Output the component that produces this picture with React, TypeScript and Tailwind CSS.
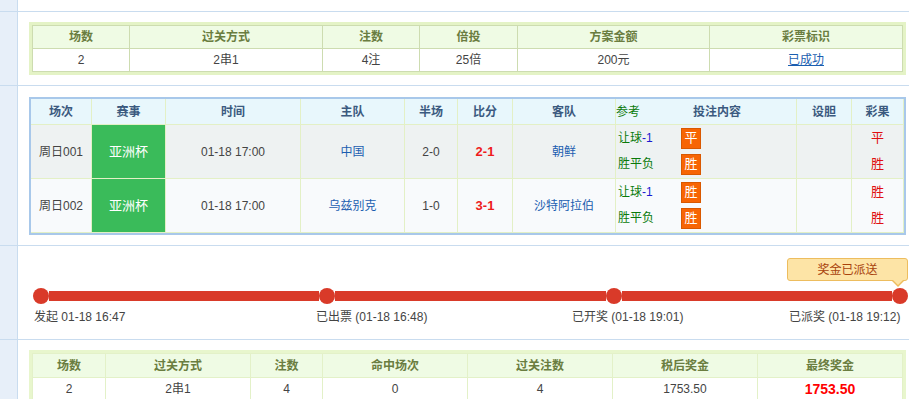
const font = { fontFamily: '"Liberation Sans", "Noto Sans CJK SC", sans-serif' };

function Section({ h, children, last }: { h: string; children?: React.ReactNode; last?: boolean }) {
  return (
    <div className={`flex shrink-0 ${h} ${last ? "" : "border-b border-[#c9dcef]"}`}>
      <div className="w-[18px] shrink-0 border-r border-[#c9dcef] bg-[#e7eff9]" />
      <div className="relative flex-1">{children}</div>
    </div>
  );
}

const summary = [
  { w: "w-[97px]", h: "场数", v: "2" },
  { w: "w-[193px]", h: "过关方式", v: "2串1" },
  { w: "w-[97px]", h: "注数", v: "4注" },
  { w: "w-[98px]", h: "倍投", v: "25倍" },
  { w: "w-[192px]", h: "方案金额", v: "200元" },
  { w: "w-[193px]", h: "彩票标识", v: "已成功", link: true },
];

const result = [
  { w: "w-[73px]", h: "场数", v: "2" },
  { w: "w-[145px]", h: "过关方式", v: "2串1" },
  { w: "w-[72px]", h: "注数", v: "4" },
  { w: "w-[145px]", h: "命中场次", v: "0" },
  { w: "w-[145px]", h: "过关注数", v: "4" },
  { w: "w-[145px]", h: "税后奖金", v: "1753.50" },
  { w: "w-[145px]", h: "最终奖金", v: "1753.50", red: true },
];

const matches = [
  {
    no: "周日001",
    time: "01-18 17:00",
    home: "中国",
    half: "2-0",
    score: "2-1",
    away: "朝鲜",
    picks: ["平", "胜"],
    res: ["平", "胜"],
    bg: "bg-[#eef2f2]",
  },
  {
    no: "周日002",
    time: "01-18 17:00",
    home: "乌兹别克",
    half: "1-0",
    score: "3-1",
    away: "沙特阿拉伯",
    picks: ["胜", "胜"],
    res: ["胜", "胜"],
    bg: "bg-[#f8fafc]",
  },
];

const cell = "flex items-center justify-center border-r border-b border-[#e3f0c6]";

function Pick({ label, value }: { label: React.ReactNode; value: string }) {
  return (
    <div className="flex h-[26px] items-center">
      <span className="w-[65px] pl-[2px] text-[#0a7a0a]">{label}</span>
      <span className="flex h-[21px] w-[20px] items-center justify-center border border-[#d95800] bg-[#f76504] text-[13px] text-white">
        {value}
      </span>
    </div>
  );
}

function Step() {
  return <div className="h-[16px] w-[16px] shrink-0 rounded-full bg-[#d93a29]" />;
}

export default function App() {
  return (
    <div className="flex h-[399px] w-[909px] flex-col overflow-hidden bg-white text-[12px] text-[#444]" style={font}>
      <Section h="h-[12px]" />

      <Section h="h-[74px]">
        <div className="ml-[11px] mt-[10px] w-[877px] bg-[#e4f3c6] p-[3px]">
          <div className="flex border-l border-t border-[#cddcb0]">
            {summary.map((c) => (
              <div key={c.h} className={`${c.w} flex flex-col`}>
                <div className="flex h-[23px] items-center justify-center border-b border-r border-[#cddcb0] bg-[#effbe4] font-bold text-[#6a7d40]">
                  {c.h}
                </div>
                <div className="flex h-[23px] items-center justify-center border-b border-r border-[#cddcb0] bg-white">
                  {c.link ? <span className="text-[#1b5eb0] underline">{c.v}</span> : c.v}
                </div>
              </div>
            ))}
          </div>
        </div>
      </Section>

      <Section h="h-[160px]">
        <div className="ml-[11px] mt-[11px] w-[877px] border-2 border-[#a8c8ea]">
          <div className="grid grid-cols-[61px_74px_135px_104px_53px_55px_103px_181px_55px_52px]">
            {["场次", "赛事", "时间", "主队", "半场", "比分", "客队"].map((t) => (
              <div key={t} className={`${cell} h-[26px] bg-[#e8f7fc] font-bold text-[#3b5a7f]`}>
                {t}
              </div>
            ))}
            <div className="flex h-[26px] items-center border-b border-r border-[#e3f0c6] bg-[#e8f7fc]">
              <span className="w-[77px] text-[#0a7a0a]">参考</span>
              <span className="font-bold text-[#3b5a7f]">投注内容</span>
            </div>
            {["设胆", "彩果"].map((t) => (
              <div key={t} className={`${cell} h-[26px] bg-[#e8f7fc] font-bold text-[#3b5a7f]`}>
                {t}
              </div>
            ))}

            {matches.map((m) => (
              <div key={m.no} className="contents">
                <div className={`${cell} ${m.bg} h-[54px]`}>{m.no}</div>
                <div className={`${cell} h-[54px] bg-[#3abb5a] text-[13px] text-white`}>亚洲杯</div>
                <div className={`${cell} ${m.bg} h-[54px]`}>{m.time}</div>
                <div className={`${cell} ${m.bg} h-[54px] text-[#1b5eb0]`}>{m.home}</div>
                <div className={`${cell} ${m.bg} h-[54px]`}>{m.half}</div>
                <div className={`${cell} ${m.bg} h-[54px] text-[13px] font-bold text-[#ee1c1c]`}>{m.score}</div>
                <div className={`${cell} ${m.bg} h-[54px] text-[#1b5eb0]`}>{m.away}</div>
                <div className={`${m.bg} h-[54px] border-b border-r border-[#e3f0c6]`}>
                  <Pick
                    label={
                      <>
                        让球<span className="text-[#1a1ad0]">-1</span>
                      </>
                    }
                    value={m.picks[0]}
                  />
                  <Pick label="胜平负" value={m.picks[1]} />
                </div>
                <div className={`${cell} ${m.bg} h-[54px]`} />
                <div className={`${m.bg} h-[54px] border-b border-r border-[#e3f0c6] text-[13px] text-[#e01010]`}>
                  <div className="flex h-[26px] items-center justify-center">{m.res[0]}</div>
                  <div className="flex h-[26px] items-center justify-center">{m.res[1]}</div>
                </div>
              </div>
            ))}
          </div>
        </div>
      </Section>

      <Section h="h-[94px]">
        <div className="flex justify-end pr-[1px] pt-[12px]">
          <div className="relative flex h-[23px] w-[121px] items-center justify-center rounded-[3px] border border-[#edbd5e] bg-[#fde4a6] text-[#a8420c]">
            奖金已派送
            <div className="absolute -bottom-[7px] right-[2px] h-0 w-0 border-x-[7px] border-t-[7px] border-x-transparent border-t-[#edbd5e]" />
            <div className="absolute -bottom-[5px] right-[3px] h-0 w-0 border-x-[6px] border-t-[6px] border-x-transparent border-t-[#fde4a6]" />
          </div>
        </div>
        <div className="ml-[15px] mt-[7px] flex w-[875px] items-center">
          <Step />
          <div className="h-[10px] flex-1 bg-[#d93a29]" />
          <Step />
          <div className="h-[10px] flex-1 bg-[#d93a29]" />
          <Step />
          <div className="h-[10px] flex-1 bg-[#d93a29]" />
          <Step />
        </div>
        <div className="ml-[16px] mt-[5px] flex text-[12px] leading-[16px] text-[#444]">
          <span className="w-[282px]">发起 01-18 16:47</span>
          <span className="w-[256px]">已出票 (01-18 16:48)</span>
          <span className="w-[217px]">已开奖 (01-18 19:01)</span>
          <span>已派奖 (01-18 19:12)</span>
        </div>
      </Section>

      <Section h="flex-1" last>
        <div className="ml-[11px] mt-[10px] w-[877px] bg-[#e8f6cd] p-[3px]">
          <div className="flex border-l border-t border-[#e3f1c8]">
            {result.map((c) => (
              <div key={c.h} className={`${c.w} flex flex-col`}>
                <div className="flex h-[24px] items-center justify-center border-b border-r border-[#e3f1c8] bg-[#effbe4] font-bold text-[#6a7d40]">
                  {c.h}
                </div>
                <div
                  className={`flex h-[23px] items-center justify-center border-b border-r border-[#e3f1c8] bg-white ${
                    c.red ? "text-[14px] font-bold text-[#f00]" : ""
                  }`}
                >
                  {c.v}
                </div>
              </div>
            ))}
          </div>
        </div>
      </Section>
    </div>
  );
}
